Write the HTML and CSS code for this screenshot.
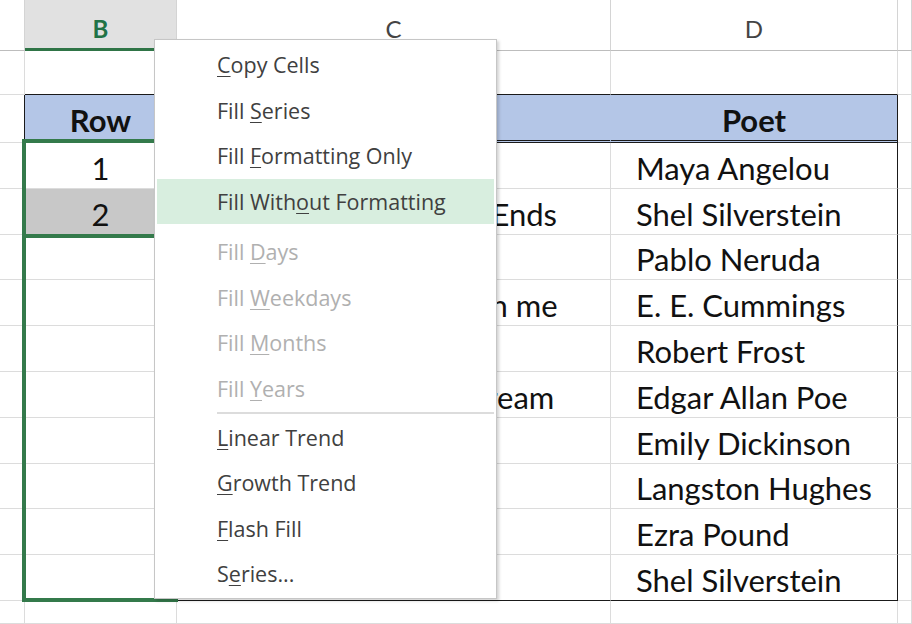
FILE: index.html
```html
<!DOCTYPE html>
<html>
<head>
<meta charset="utf-8">
<link rel="stylesheet" href="styles.css">
</head>
<body>
<div class="sheet">
  <div class="grid">
    <div class="c hd"></div><div class="c hd hd-sel">B</div><div class="c hd hd-txt">C</div><div class="c hd hd-txt">D</div><div class="c hd"></div>

    <div class="c"></div><div class="c above"></div><div class="c above"></div><div class="c above"></div><div class="c"></div>

    <div class="c tl"></div><div class="c th th-in">Row</div><div class="c th th-in"></div><div class="c th tr">Poet</div><div class="c"></div>

    <div class="c tl"></div><div class="c num">1</div><div class="c title">Still I Rise</div><div class="c poet tr">Maya Angelou</div><div class="c"></div>
    <div class="c tl"></div><div class="c num picked">2</div><div class="c title">Where the Sidewalk Ends</div><div class="c poet tr">Shel Silverstein</div><div class="c"></div>
    <div class="c tl"></div><div class="c num"></div><div class="c title">Sonnet XVII</div><div class="c poet tr">Pablo Neruda</div><div class="c"></div>
    <div class="c tl"></div><div class="c num"></div><div class="c title">i carry your heart with me</div><div class="c poet tr">E. E. Cummings</div><div class="c"></div>
    <div class="c tl"></div><div class="c num"></div><div class="c title">Fire and Ice</div><div class="c poet tr">Robert Frost</div><div class="c"></div>
    <div class="c tl"></div><div class="c num"></div><div class="c title">A Dream Within a Dream</div><div class="c poet tr">Edgar Allan Poe</div><div class="c"></div>
    <div class="c tl"></div><div class="c num"></div><div class="c title">Hope</div><div class="c poet tr">Emily Dickinson</div><div class="c"></div>
    <div class="c tl"></div><div class="c num"></div><div class="c title">Harlem</div><div class="c poet tr">Langston Hughes</div><div class="c"></div>
    <div class="c tl"></div><div class="c num"></div><div class="c title">In a Station</div><div class="c poet tr">Ezra Pound</div><div class="c"></div>
    <div class="c tl"></div><div class="c num last"></div><div class="c title last">Sick</div><div class="c poet tr last">Shel Silverstein</div><div class="c"></div>

    <div class="c"></div><div class="c"></div><div class="c"></div><div class="c"></div><div class="c"></div>
  </div>

  <div class="sel-outer"></div>
  <div class="sel-inner"></div>

  <div class="menu">
    <div class="item"><u>C</u>opy Cells</div>
    <div class="item">Fill <u>S</u>eries</div>
    <div class="item">Fill <u>F</u>ormatting Only</div>
    <div class="item hover">Fill With<u>o</u>ut Formatting</div>
    <div class="item off gap">Fill <u>D</u>ays</div>
    <div class="item off">Fill <u>W</u>eekdays</div>
    <div class="item off">Fill <u>M</u>onths</div>
    <div class="item off">Fill <u>Y</u>ears</div>
    <div class="sep"></div>
    <div class="item"><u>L</u>inear Trend</div>
    <div class="item"><u>G</u>rowth Trend</div>
    <div class="item"><u>F</u>lash Fill</div>
    <div class="item">S<u>e</u>ries...</div>
  </div>
</div>
</body>
</html>
```

FILE: styles.css
```css
html, body {
  margin: 0;
  padding: 0;
  background: #ffffff;
}

.sheet {
  position: relative;
  width: 912px;
  height: 624px;
  overflow: hidden;
  font-family: Lato, "Liberation Sans", sans-serif;
}

.grid {
  display: grid;
  grid-template-columns: 25px 152px 434px 287px 1fr;
  grid-template-rows: 51px 44px 48px repeat(10, 45.8px) 1fr;
  width: 912px;
  height: 624px;
}

.c {
  box-sizing: border-box;
  border-right: 1px solid #dcdcdc;
  border-bottom: 1px solid #dcdcdc;
  display: flex;
  align-items: center;
  font-size: 31px;
  color: #111111;
  white-space: nowrap;
  overflow: visible;
  min-width: 0;
  padding-top: 5px;
}

.hd {
  border-bottom: 1px solid #bdbdbd;
  border-right-color: #d4d4d4;
  justify-content: center;
  font-size: 24px;
  color: #444444;
  padding-top: 6px;
}

.hd-sel {
  background: #e1e1e1;
  color: #217346;
  font-weight: bold;
  border-bottom: 3px solid #2f7446;
  padding-top: 8px;
}

.above {
  border-bottom-color: #1a1a1a;
}

.tl {
  border-right-color: #1a1a1a;
}

.tr {
  border-right-color: #1a1a1a;
}

.th {
  background: #b4c6e7;
  border-bottom: 3px double #1a1a1a;
  font-weight: bold;
  justify-content: center;
  padding-top: 4px;
}

.th-in {
  border-right-color: #b4c6e7;
}

.num {
  justify-content: center;
}

.picked {
  background: #c8c8c8;
}

.title {
  justify-content: center;
  padding-right: 20px;
}

.poet {
  padding-left: 25px;
}

.last {
  border-bottom-color: #1a1a1a;
}

.sel-outer {
  position: absolute;
  left: 22px;
  top: 139px;
  width: 156px;
  height: 463px;
  box-sizing: border-box;
  border: 4px solid #347a4b;
}

.sel-inner {
  position: absolute;
  left: 22px;
  top: 234px;
  width: 156px;
  height: 4px;
  background: #347a4b;
}

.menu {
  position: absolute;
  left: 154px;
  top: 39px;
  width: 343px;
  height: 560px;
  box-sizing: border-box;
  background: #ffffff;
  border: 1px solid #c6c6c6;
  box-shadow: 2px 2px 3px rgba(0, 0, 0, 0.18);
  padding: 2px 2px 0 2px;
  font-family: "Open Sans", "Noto Sans", sans-serif;
  font-size: 21.5px;
  color: #404040;
  z-index: 5;
}

.item {
  height: 45.5px;
  line-height: 45.5px;
  padding-left: 60px;
  white-space: nowrap;
}

.item u {
  text-decoration-thickness: 1px;
  text-underline-offset: 3px;
}

.hover {
  background: #d8eedf;
}

.off {
  color: #b0b0b0;
}

.gap {
  margin-top: 5px;
}

.sep {
  height: 3.5px;
  margin-left: 60px;
  display: flex;
  align-items: center;
}

.sep::before {
  content: "";
  display: block;
  width: 100%;
  height: 2px;
  background: #dcdcdc;
}
```
